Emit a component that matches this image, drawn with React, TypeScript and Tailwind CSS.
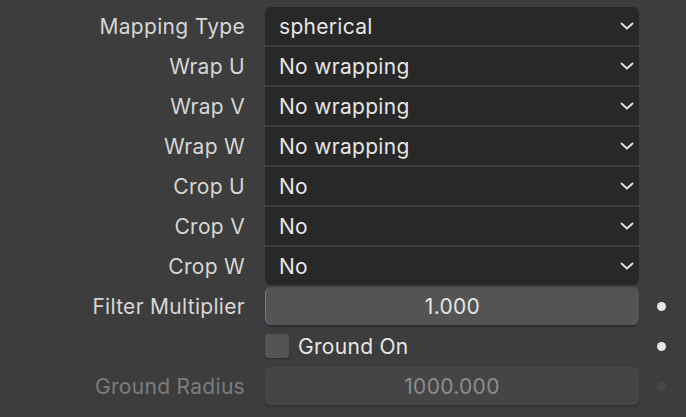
const DROPDOWNS = [
  { label: 'Mapping Type', value: 'spherical' },
  { label: 'Wrap U', value: 'No wrapping' },
  { label: 'Wrap V', value: 'No wrapping' },
  { label: 'Wrap W', value: 'No wrapping' },
  { label: 'Crop U', value: 'No' },
  { label: 'Crop V', value: 'No' },
  { label: 'Crop W', value: 'No' },
]

function Chevron() {
  return (
    <svg width="14" height="10" viewBox="0 0 14 10" fill="none">
      <path d="M1.5 2.5 L7 7.5 L12.5 2.5" stroke="#e6e6e6" strokeWidth="1.8" strokeLinecap="round" strokeLinejoin="round" />
    </svg>
  )
}

function Label({ text, dim }: { text: string; dim?: boolean }) {
  return (
    <div className={`w-[265px] shrink-0 pr-[20px] text-right ${dim ? 'text-[#7c7c7c]' : 'text-[#d6d6d6]'}`}>
      {text}
    </div>
  )
}

function Dot({ dim }: { dim?: boolean }) {
  return (
    <div className="flex w-[45px] justify-center">
      <div className={`h-[9px] w-[9px] rounded-full ${dim ? 'bg-[#474747]' : 'bg-[#e8e8e8]'}`} />
    </div>
  )
}

export default function App() {
  return (
    <div
      className="h-[417px] w-[686px] overflow-hidden bg-[#3d3d3d] pt-[7px] text-[21px] leading-none tracking-[0.3px]"
      style={{ fontFamily: 'Inter, "Noto Sans", sans-serif' }}
    >
      <div className="flex flex-col gap-[2px]">
        {DROPDOWNS.map((d, i) => (
          <div key={d.label} className="flex h-[38px] items-center">
            <Label text={d.label} />
            <div
              className={`flex h-full w-[374px] items-center justify-between bg-[#282828] pl-[14px] pr-[5px] text-[#e6e6e6] ${
                i === 0 ? 'rounded-t-[6px]' : ''
              } ${i === DROPDOWNS.length - 1 ? 'rounded-b-[6px]' : ''}`}
            >
              <span>{d.value}</span>
              <Chevron />
            </div>
          </div>
        ))}
      </div>

      <div className="mt-[2px] flex h-[38px] items-center">
        <Label text="Filter Multiplier" />
        <div className="flex h-full w-[374px] items-center justify-center rounded-[6px] border-l border-[#5a7ec4] bg-[#545454] text-[#e6e6e6] shadow-[0_2px_2px_rgba(0,0,0,0.25)]">
          1.000
        </div>
        <Dot />
      </div>

      <div className="mt-[2px] flex h-[38px] items-center">
        <div className="w-[265px] shrink-0" />
        <div className="flex w-[374px] items-center gap-[9px]">
          <div className="h-[24px] w-[24px] rounded-[4px] bg-[#545454] shadow-[0_1px_2px_rgba(0,0,0,0.3)]" />
          <span className="text-[#e6e6e6]">Ground On</span>
        </div>
        <Dot />
      </div>

      <div className="mt-[2px] flex h-[38px] items-center">
        <Label text="Ground Radius" dim />
        <div className="flex h-full w-[374px] items-center justify-center rounded-[6px] bg-[#454545] text-[#8c8c8c] shadow-[0_2px_2px_rgba(0,0,0,0.2)]">
          1000.000
        </div>
        <Dot dim />
      </div>
    </div>
  )
}
